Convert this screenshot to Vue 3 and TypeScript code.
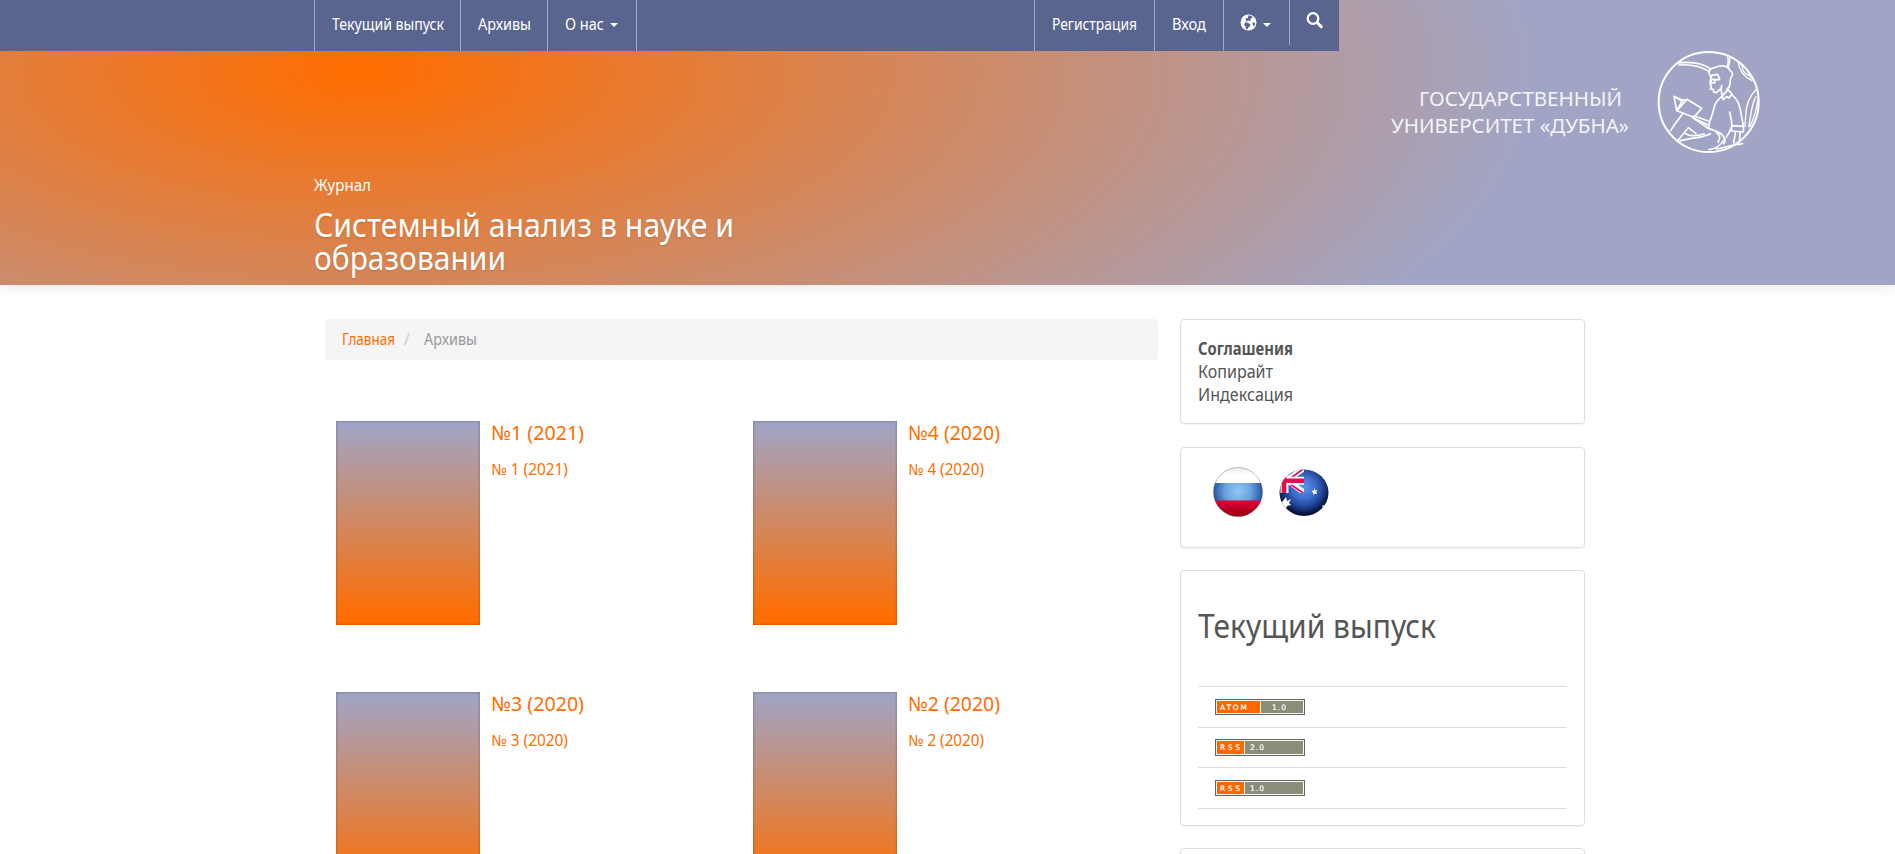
<script setup lang="ts">
import { ref, type Directive } from 'vue'

interface Issue { title: string; label: string; titleWidth: number; labelWidth: number }
interface Feed { name: string; version: string; split: number; nameWidth: number; versionX: number; tall?: boolean }

// Condenses a line of text horizontally to the given width.
const vFit: Directive<HTMLElement, number> = {
  mounted(el, binding) {
    const natural = el.getBoundingClientRect().width
    el.style.width = `${binding.value}px`
    el.style.transform = `scaleX(${binding.value / natural})`
  },
}

const issues = ref<Issue[]>([
  { title: '№1 (2021)', label: '№ 1 (2021)', titleWidth: 93, labelWidth: 77 },
  { title: '№4 (2020)', label: '№ 4 (2020)', titleWidth: 92, labelWidth: 76 },
  { title: '№3 (2020)', label: '№ 3 (2020)', titleWidth: 93, labelWidth: 77 },
  { title: '№2 (2020)', label: '№ 2 (2020)', titleWidth: 92, labelWidth: 76 },
])

const feeds = ref<Feed[]>([
  { name: 'ATOM', version: '1.0', split: 45, nameWidth: 27, versionX: 57 },
  { name: 'RSS', version: '2.0', split: 29, nameWidth: 20, versionX: 35, tall: true },
  { name: 'RSS', version: '1.0', split: 29, nameWidth: 20, versionX: 35 },
])
</script>

<template>
  <div class="page">
    <header class="header">
      <nav class="nav">
        <ul class="menu primary">
          <li><a><span v-fit="112" class="fit">Текущий выпуск</span></a></li>
          <li><a><span v-fit="53" class="fit">Архивы</span></a></li>
          <li><a><span v-fit="39" class="fit">О нас</span><i class="caret"></i></a></li>
        </ul>
        <ul class="menu user">
          <li><a><span v-fit="85" class="fit">Регистрация</span></a></li>
          <li><a><span v-fit="34" class="fit">Вход</span></a></li>
          <li>
            <a>
              <svg class="globe" width="17" height="17" viewBox="0 0 17 17">
                <circle cx="8.5" cy="8.5" r="8" fill="#fff" />
                <path d="M8.500 1.600c2.300 0 3.500.6 4.600 1.700l-1.800.4-1 1.600.9.900-1.500.8-1.800-.8-.6 1.400-1.300.5.400-2-1.200-.6 1-1.200 1.700-.3zM5.300 8.300l3.100.8 2.200 1.700-.9 1.900-1.700.8-.5 2-1.600-.6-.300-2.400-1.500-1.700zM12.400 8.400l1.900.2 1 1.500-1.300 2.500-1.200-1.500z" fill="#5a658f" />
              </svg>
              <i class="caret"></i>
            </a>
          </li>
          <li class="search">
            <svg width="18" height="18" viewBox="0 0 18 18" fill="none" stroke="#fff">
              <circle cx="7" cy="6.500" r="5.300" stroke-width="2.300" />
              <path d="m11.300 10.800 4 4" stroke-width="3" stroke-linecap="round" />
            </svg>
          </li>
        </ul>
      </nav>

      <svg class="logo" width="380" height="110" viewBox="0 0 380 110">
        <g class="logo-text">
          <text x="29" y="59.500" textLength="203" lengthAdjust="spacingAndGlyphs">ГОСУДАРСТВЕННЫЙ</text>
          <text x="1" y="86.500" textLength="238" lengthAdjust="spacingAndGlyphs">УНИВЕРСИТЕТ «ДУБНА»</text>
        </g>
        <g transform="translate(250 -6) scale(.33333)" fill="none" stroke="#fff" stroke-width="5" stroke-linejoin="round" stroke-linecap="round">
          <circle cx="206" cy="186" r="150" stroke-width="6" />
          <path d="M113 69c40-5 77 2 99 18M116 75c35-3 67 4 92 20" />
          <path d="M262 47c4 11 3 22-1 33M269 50c1 10 0 22-3 32" stroke-width="4" />
          <path d="M294 65c4 25 15 45 42 57M299 67c14 10 26 24 34 49M308 76c-4 12 4 24 18 30" stroke-width="4" />
          <path d="M209 105c-7-15 5-21 17-23 19-8 39-5 43 9 12 6 10 15 3 23l-4 27-8 7M209 105l4 6-3 19 4 10-3 7 9 1 1 8 8 2 14-12 2-9M213 107l20-4 6 14M213 119l11-1 1 10-11 1zM229 119h9M243 147l3 18" />
          <path d="m246 169 18-20 12 13-9 12-7-4-10 9zM245 169c-17 15-20 22-25 42-3 18-14 34-14 52M277 166c13 9 19 19 23 39l10 51M269 216c3 17 8 30 6 42-3 13-8 23-16 34M275 257l36 2-1 17-35-3zM286 279l-5 30M300 279l-2 27" />
          <path d="M102 169l8 43 18-31zM102 169l20 12M110 212l31-34 44 27-24 27-48-19M141 179l-20 3M162 227l42 16M157 232l45 22" />
          <path d="M127 223c-15 20-27 35-35 49M157 232l46 32c15 8 31 8 42 19 9 9 15 18 6 28M145 263l-31 38M145 263l23 18M137 281c15 9 40 6 56 1M120 303c29-10 66-8 91-22M229 278c10 5 14 16 5 29M207 329c19-3 36-12 46-32M228 327c24-3 47-13 80-16" />
          <path d="M349 148c-20 20-31 45-32 79l-2 32M348 170c-15 25-14 56-22 90M355 174c-5 31-10 55-25 86" stroke-width="4" />
        </g>
      </svg>

      <div class="branding">
        <p class="kicker"><span v-fit="57" class="fit">Журнал</span></p>
        <h1 class="site-title">
          <span v-fit="420" class="fit">Системный анализ в науке и</span>
          <span v-fit="192" class="fit">образовании</span>
        </h1>
      </div>
    </header>

    <div class="content">
      <main class="main">
        <div class="breadcrumb">
          <a><span v-fit="53" class="fit">Главная</span></a>
          <span class="slash">/</span>
          <span v-fit="53" class="fit current">Архивы</span>
        </div>
        <div class="issues">
          <article v-for="issue in issues" :key="issue.title" class="issue">
            <div class="cover"></div>
            <div class="info">
              <h2><span v-fit="issue.titleWidth" class="fit">{{ issue.title }}</span></h2>
              <p><span v-fit="issue.labelWidth" class="fit">{{ issue.label }}</span></p>
            </div>
          </article>
        </div>
      </main>

      <aside class="sidebar">
        <section class="card agreements">
          <strong><span v-fit="95" class="fit">Соглашения</span></strong>
          <a><span v-fit="75" class="fit">Копирайт</span></a>
          <a><span v-fit="95" class="fit">Индексация</span></a>
        </section>
        <section class="card flags">
          <svg width="52" height="52" viewBox="0 0 52 52">
            <defs>
              <clipPath id="ru"><circle cx="26" cy="26" r="24.500" /></clipPath>
              <radialGradient id="ruBlue" gradientUnits="userSpaceOnUse" cx="26" cy="25" r="26"><stop offset="0" stop-color="#91c8f5" /><stop offset=".5" stop-color="#6aa4dc" /><stop offset="1" stop-color="#1f4ba0" /></radialGradient>
              <linearGradient id="ruRed" x2="0" y2="1"><stop offset="0" stop-color="#e0003a" /><stop offset="1" stop-color="#8f0008" /></linearGradient>
              <linearGradient id="ruWhite" x2="0" y2="1"><stop offset="0" stop-color="#e4e4e4" /><stop offset=".5" stop-color="#fff" /></linearGradient>
            </defs>
            <g clip-path="url(#ru)">
              <path d="M0 0h52v17H0z" fill="url(#ruWhite)" />
              <path d="M0 17h52v18H0z" fill="url(#ruBlue)" />
              <path d="M0 34.500h52V52H0z" fill="url(#ruRed)" />
            </g>
            <circle cx="26" cy="26" r="24.500" fill="none" stroke="#333" stroke-opacity=".3" />
          </svg>
          <svg width="52" height="52" viewBox="0 0 52 52">
            <defs>
              <clipPath id="au"><ellipse cx="26" cy="26.700" rx="24.500" ry="23.200" /></clipPath>
              <clipPath id="canton"><path d="M0 0h26v27H0z" /></clipPath>
              <radialGradient id="auBlue" cy=".42"><stop offset="0" stop-color="#5c96ee" /><stop offset=".45" stop-color="#3d6bc9" /><stop offset=".75" stop-color="#203f91" /><stop offset="1" stop-color="#07153d" /></radialGradient>
            </defs>
            <g clip-path="url(#au)">
              <path d="M0 0h52v52H0z" fill="url(#auBlue)" />
              <g clip-path="url(#canton)">
                <path d="M9 14 28 1M9 14l19 14" stroke="#fff" stroke-width="5.500" />
                <path d="m10 14 18-13M12 18l16 11" stroke="#e00b50" stroke-width="1.700" />
                <path d="M0 14.800h26M6.500 2v25" stroke="#fff" stroke-width="8" />
                <path d="M0 14.800h26M6 8v19" stroke="#ed0750" stroke-width="4.600" />
              </g>
              <path d="m8 31 1 4 4-2-2 4 2 2-4 1-1 3-3-2-3 1 1-3-2-3h3zM36.500 22l.8 2.400 2.200-.4-1.300 1.800 1 2.200-2.200-.5-1.500 1.500-.3-2.300-1.700-1.400 2.300-.8zM46 39l1 2-2 1-1-2z" fill="#fff" />
            </g>
          </svg>
        </section>
        <section class="card current-issue">
          <h2><span v-fit="238" class="fit">Текущий выпуск</span></h2>
          <ul class="feeds">
            <li v-for="(feed, i) in feeds" :key="i" :class="{ tall: feed.tall }">
              <svg width="90" :height="feed.tall ? 17 : 16" :viewBox="feed.tall ? '0 0 90 17' : '0 0 90 16'">
                <rect x=".5" y=".5" width="89" :height="feed.tall ? 16 : 15" fill="#f7f7f4" stroke="#666" />
                <rect x="2" y="2" :width="feed.split - 2" :height="feed.tall ? 13 : 12" fill="#ff6600" />
                <rect :x="feed.split + 1" y="2" :width="87 - feed.split" :height="feed.tall ? 13 : 12" fill="#898e79" />
                <text x="5" y="11" :textLength="feed.nameWidth">{{ feed.name }}</text>
                <text :x="feed.versionX" y="11" textLength="14">{{ feed.version }}</text>
              </svg>
            </li>
          </ul>
        </section>
        <section class="card next"></section>
      </aside>
    </div>
  </div>
</template>

<style>
html, body { overflow: hidden; }
</style>

<style scoped>
.page {
  box-sizing: border-box;
  height: 854px;
  overflow: hidden;
  background: #fff;
  color: #555;
  font-family: "Noto Sans", "Open Sans", sans-serif;
}
.page *, .page *::before { box-sizing: border-box; }
h1, h2, p, ul { margin: 0; padding: 0; font-weight: 400; }
ul { list-style: none; }
svg { display: block; }
.fit { display: inline-block; white-space: nowrap; transform-origin: 0 50%; }
.header {
  position: relative;
  height: 285px;
  background: radial-gradient(ellipse 1175px 460px at 360px 72px, #ff6d00, #a1a5c5);
  box-shadow: 0 0 15px rgba(0, 0, 0, .12);
  color: #fff;
}
.nav {
  display: flex;
  justify-content: space-between;
  width: 1339px;
  height: 51px;
  padding-left: 314px;
  background: #5a658f;
}
.menu { display: flex; align-items: flex-start; font-size: 15.500px; line-height: 48px; }
.menu li { height: 51px; padding-left: 17px; border-left: 1px solid #a3a6c1; }
.menu a { display: flex; align-items: flex-start; }
.primary li:nth-child(1) { width: 146px; }
.primary li:nth-child(2) { width: 87px; }
.primary li:nth-child(3) { width: 90px; border-right: 1px solid #a3a6c1; }
.user li:nth-child(1) { width: 120px; }
.user li:nth-child(2) { width: 69px; }
.user li:nth-child(3) { width: 66px; padding-left: 16px; }
.user .search { width: 50px; height: 45px; padding: 12px 0 0 16px; }
.caret {
  margin: 23px 0 0 6px;
  border-top: 4px solid #fff;
  border-right: 4.500px solid transparent;
  border-left: 4.500px solid transparent;
}
.globe { margin-top: 14px; }
.logo { position: absolute; top: 46px; left: 1390px; }
.logo-text { fill: #fff; fill-opacity: .9; font-size: 20.500px; }
.branding { padding: 122px 0 0 314px; }
.kicker { height: 35px; font-size: 16.500px; line-height: 24px; }
.site-title { font-size: 33.500px; line-height: 33px; text-shadow: 0 1px 2px rgba(0, 0, 0, .15); }
.site-title .fit { display: table; }
.content { display: flex; gap: 22px; padding: 34px 0 0 325px; }
.main { width: 833px; }
.breadcrumb {
  display: flex;
  height: 41px;
  padding-left: 17px;
  border-radius: 4px;
  background: #f5f5f5;
  font-size: 15.500px;
  line-height: 41px;
}
.breadcrumb a { color: #ff6d00; }
.slash { width: 29px; padding-left: 9px; color: #ccc; }
.current { color: #999; }
.issues { display: grid; grid-template-columns: 417px 417px; grid-auto-rows: 204px; row-gap: 67px; padding: 61px 0 0 11px; }
.issue { display: flex; gap: 11px; }
.cover {
  width: 144px;
  height: 204px;
  background: linear-gradient(#9fa5c8, #ff6d00 97%);
  box-shadow: inset 0 0 3px rgba(0, 0, 0, .35);
}
.info { color: #ff6d00; }
.info h2 { height: 36px; font-size: 20px; line-height: 23px; }
.info p { font-size: 15.500px; line-height: 24px; }
.sidebar { width: 405px; }
.card {
  border: 1px solid #ddd;
  border-radius: 4px;
  box-shadow: 0 1px 1px rgba(0, 0, 0, .05);
  padding: 0 17px;
}
.agreements { display: flex; flex-direction: column; height: 105px; margin-bottom: 23px; padding-top: 17px; font-size: 17.500px; line-height: 23px; }
.flags { display: flex; gap: 14px; height: 101px; margin-bottom: 22px; padding: 18px 0 0 31px; }
.current-issue { height: 256px; margin-bottom: 22px; }
.current-issue h2 { height: 115px; padding-top: 34px; font-size: 33.500px; line-height: 40px; }
.feeds li { height: 40.700px; padding: 12px 0 0 17px; border-top: 1px solid #ddd; }
.feeds .tall { padding-top: 11px; }
.feeds { border-bottom: 1px solid #ddd; }
.feeds text { fill: #fff; font-family: "DejaVu Sans", sans-serif; font-size: 7.500px; stroke: #fff; stroke-width: .2px; }
.next { height: 100px; }
</style>
